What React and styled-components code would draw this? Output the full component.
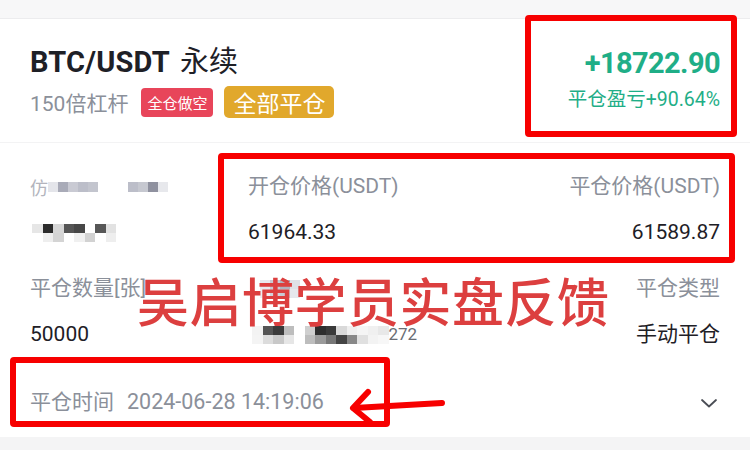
import React from "react";
import styled, { createGlobalStyle } from "styled-components";

const Global = createGlobalStyle`
  html, body { margin: 0; padding: 0; background: #ffffff; }
  body { font-family: Roboto, "Noto Sans CJK SC", "Noto Sans", sans-serif; }
  * { box-sizing: border-box; }
`;

const Screen = styled.div`
  position: relative;
  width: 750px;
  height: 450px;
  overflow: hidden;
  background: #f4f4f5;
  display: flex;
  flex-direction: column;
`;

const TopStrip = styled.div`
  height: 19px;
  background: #f7f7f8;
  border-bottom: 1px solid #ececee;
  flex: none;
`;

const Card = styled.div`
  background: #ffffff;
  height: 418px;
  flex: none;
  display: flex;
  flex-direction: column;
`;

const Header = styled.div`
  display: flex;
  justify-content: space-between;
  align-items: flex-start;
  padding: 25px 30px 0 30px;
  height: 124px;
  border-bottom: 1px solid #f3f3f4;
`;

const HeaderLeft = styled.div`
  display: flex;
  flex-direction: column;
  gap: 6px;
`;

const Title = styled.div`
  font-size: 29px;
  line-height: 36px;
  font-weight: 700;
  color: #1e2026;
  letter-spacing: 0.2px;
  span {
    font-weight: 400;
    margin-left: 10px;
  }
`;

const SubRow = styled.div`
  display: flex;
  align-items: center;
  gap: 11px;
`;

const Leverage = styled.span`
  font-size: 21px;
  color: #8b909a;
  margin-right: 2px;
`;

const Badge = styled.span`
  display: inline-flex;
  align-items: center;
  justify-content: center;
  color: #ffffff;
  background: ${(p) => p.$bg};
  font-size: ${(p) => p.$fs}px;
  height: ${(p) => p.$h}px;
  padding: 0 ${(p) => p.$px}px;
  border-radius: ${(p) => p.$r}px;
`;

const HeaderRight = styled.div`
  display: flex;
  flex-direction: column;
  align-items: flex-end;
  gap: 8px;
  padding-top: 2px;
`;

const Pnl = styled.div`
  font-size: 29px;
  line-height: 34px;
  font-weight: 700;
  color: #1fae87;
  letter-spacing: -0.6px;
`;

const PnlRate = styled.div`
  font-size: 19.5px;
  line-height: 24px;
  color: #1fae87;
`;

const Grid = styled.div`
  display: grid;
  grid-template-columns: 218px 1fr auto;
  row-gap: 29px;
  padding: 30px 30px 0 30px;
`;

const Cell = styled.div`
  display: flex;
  flex-direction: column;
  align-items: ${(p) => (p.$right ? "flex-end" : "flex-start")};
  gap: 19px;
`;

const Label = styled.div`
  font-size: 21px;
  line-height: 27px;
  height: 27px;
  color: #8b909a;
  white-space: nowrap;
`;

const Value = styled.div`
  font-size: ${(p) => p.$fs || 21}px;
  line-height: 27px;
  height: 27px;
  color: ${(p) => p.$c || "#1e2026"};
  white-space: nowrap;
`;

const MosaicWrap = styled.div`
  display: flex;
  align-items: center;
  height: 27px;
`;

const MosaicGrid = styled.div`
  display: grid;
  grid-template-columns: repeat(${(p) => p.$cols}, ${(p) => p.$cw}px);
  grid-auto-rows: ${(p) => p.$rh}px;
  margin-left: ${(p) => p.$ml || 0}px;
`;

const Tile = styled.div`
  background: ${(p) => p.$c};
`;

const Ghost = styled.span`
  font-size: 18px;
  color: ${(p) => p.$c};
  opacity: 0.75;
`;

const Footer = styled.div`
  display: flex;
  align-items: center;
  justify-content: space-between;
  padding: 0 30px;
  margin-top: 40px;
  height: 28px;
`;

const TimeText = styled.div`
  font-size: 21px;
  line-height: 28px;
  color: #8b909a;
  span {
    margin-left: 13px;
    font-size: 21.5px;
  }
`;

const Chevron = styled.svg`
  width: 18px;
  height: 12px;
  margin-right: 2px;
  margin-top: 2px;
`;

const RedBox = styled.div`
  position: absolute;
  left: ${(p) => p.$x}px;
  top: ${(p) => p.$y}px;
  width: ${(p) => p.$w}px;
  height: ${(p) => p.$h}px;
  border: 6px solid #f70000;
  border-radius: 4px;
  pointer-events: none;
`;

const Stamp = styled.div`
  position: absolute;
  left: 137px;
  top: 263px;
  font-family: "Noto Sans CJK SC", sans-serif;
  font-size: 52px;
  line-height: 74px;
  font-weight: 500;
  color: #dc3f3f;
  letter-spacing: 0.5px;
  white-space: nowrap;
`;

const Arrow = styled.svg`
  position: absolute;
  left: 345px;
  top: 385px;
  width: 105px;
  height: 45px;
`;

const Mosaic = ({ cols, cw, rh, tiles, ml }) => (
  <MosaicGrid $cols={cols} $cw={cw} $rh={rh} $ml={ml}>
    {tiles.map((c, i) => (
      <Tile key={i} $c={c} />
    ))}
  </MosaicGrid>
);

const W = "#ffffff";

const tilesLabel1 = [
  "#e4e5ea", "#a9abb8", "#c9cad3", "#bcbec9", "#c3c5ce", W, W, W, "#bcbec9", "#c6c8d0", "#8f919f", "#e7e8ec",
];

const tilesValue1 = [
  "#e6e6e6", "#2b2b2b", "#d6d6d6", "#555555", "#474747", W, "#575757", "#e2e2e2",
  W, "#eeeeee", "#d4d4d4", W, "#f0f0f0", "#d2d2d2", W, "#eeeeee",
];

const tilesMid = [
  "#f3f3f3", "#555555", "#3a3a3a", "#bdbdbd", W, "#cfcfcf", "#2e2e2e", "#3a3a3a", "#d9d9d9", "#efefef", "#f5f5f5", "#f0f0f0", "#e8e8e8",
  "#f4f4f4", "#dcdcdc", "#c8c8c8", "#e6e6e6", W, "#bdbdbd", "#9a9a9a", "#777777", "#444444", "#888888", "#e0e0e0", "#f3f3f3", "#f7f7f7",
];

const tilesMidLabel = [
  "#e9e9ee", "#c9cad3", "#b1b3bf", "#dfe0e6",
  "#eeeef2", "#d3d4dc", "#c9cad3", "#e6e7ec",
];

export default function App() {
  return (
    <>
      <Global />
      <Screen>
        <TopStrip />
        <Card>
          <Header>
            <HeaderLeft>
              <Title>
                BTC/USDT<span>永续</span>
              </Title>
              <SubRow>
                <Leverage>150倍杠杆</Leverage>
                <Badge $bg="#e8455a" $fs={15} $h={29} $px={6} $r={4}>
                  全仓做空
                </Badge>
                <Badge $bg="#e1a82c" $fs={23} $h={32} $px={9} $r={5}>
                  全部平仓
                </Badge>
              </SubRow>
            </HeaderLeft>
            <HeaderRight>
              <Pnl>+18722.90</Pnl>
              <PnlRate>平仓盈亏+90.64%</PnlRate>
            </HeaderRight>
          </Header>

          <Grid>
            <Cell>
              <MosaicWrap>
                <Ghost $c="#9a9ca8">仿</Ghost>
                <Mosaic cols={12} cw={10} rh={10} tiles={tilesLabel1} />
              </MosaicWrap>
              <MosaicWrap>
                <Mosaic cols={8} cw={10.5} rh={9} tiles={tilesValue1} ml={2} />
              </MosaicWrap>
            </Cell>
            <Cell>
              <Label>开仓价格(USDT)</Label>
              <Value>61964.33</Value>
            </Cell>
            <Cell $right>
              <Label>平仓价格(USDT)</Label>
              <Value>61589.87</Value>
            </Cell>

            <Cell>
              <Label>平仓数量[张]</Label>
              <Value>50000</Value>
            </Cell>
            <Cell>
              <MosaicWrap>
                <Mosaic cols={4} cw={10} rh={9} tiles={tilesMidLabel} ml={12} />
              </MosaicWrap>
              <MosaicWrap>
                <Mosaic cols={13} cw={10.5} rh={9} tiles={tilesMid} ml={4} />
                <Value $fs={17} $c="#6a6d75">272</Value>
              </MosaicWrap>
            </Cell>
            <Cell $right>
              <Label>平仓类型</Label>
              <Value>手动平仓</Value>
            </Cell>
          </Grid>

          <Footer>
            <TimeText>
              平仓时间<span>2024-06-28 14:19:06</span>
            </TimeText>
            <Chevron viewBox="0 0 18 12">
              <polyline points="2,3 9,9.5 16,3" fill="none" stroke="#4a4d55" strokeWidth="1.8" strokeLinecap="round" strokeLinejoin="round" />
            </Chevron>
          </Footer>
        </Card>

        <Stamp>吴启博学员实盘反馈</Stamp>
        <RedBox $x={525} $y={15} $w={212} $h={122} />
        <RedBox $x={218} $y={153} $w={517} $h={110} />
        <RedBox $x={10} $y={357} $w={380} $h={70} />
        <Arrow viewBox="0 0 105 45">
          <path d="M97 18 L9 23" fill="none" stroke="#f70000" strokeWidth="6" strokeLinecap="round" />
          <path d="M23 7 L8 23 L25 37" fill="none" stroke="#f70000" strokeWidth="6" strokeLinecap="round" strokeLinejoin="round" />
        </Arrow>
      </Screen>
    </>
  );
}
